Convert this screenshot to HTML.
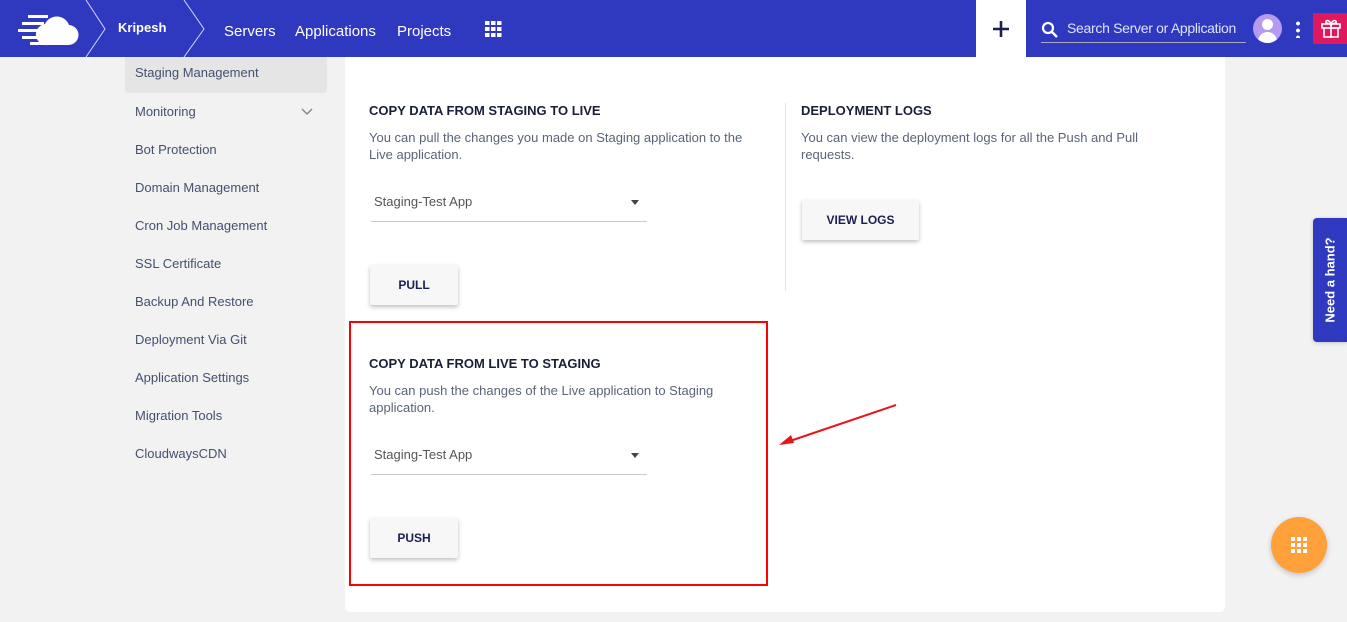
<!DOCTYPE html>
<html><head><style>
*{margin:0;padding:0;box-sizing:border-box}
body{width:1347px;height:622px;overflow:hidden;background:#f2f2f2;font-family:"Liberation Sans",sans-serif;position:relative}
.hdr{position:absolute;left:0;top:0;width:1347px;height:57px;background:#2f39bf;color:#fff}
.hdr .t{position:absolute;font-size:15px}
.side{position:absolute;left:125px;top:57px;width:202px}
.side div{height:38px;line-height:38px;padding-left:10px;font-size:13px;color:#43506e;position:relative}
.side .act{background:#e5e5e5;height:36px;line-height:32px;border-radius:0 0 3px 3px}
.card{position:absolute;left:345px;top:57px;width:880px;height:555px;background:#fff;border-radius:0 0 5px 5px}
.h{position:absolute;font-size:13px;font-weight:bold;color:#1a1f36}
.p{position:absolute;font-size:13px;color:#5a6477;line-height:17px}
.sel{position:absolute;width:276px;height:36px;border-bottom:1px solid #ccc;font-size:13px;color:#555;padding:8px 3px}
.sel:after{content:"";position:absolute;right:8px;top:14px;border:4px solid transparent;border-top:5px solid #444}
.btn{position:absolute;background:#f7f7f7;box-shadow:0 2px 4px rgba(0,0,0,.25);font-size:12px;font-weight:bold;color:#1a1f50;text-align:center;border-radius:2px}
</style></head><body>
<div class="hdr">
<svg style="position:absolute;left:18px;top:12px" width="62" height="34" viewBox="0 0 62 34"><path d="M30 33h20a10 10 0 0 0 1-20 13 13 0 0 0-24-1 10 10 0 0 0 3 21z" fill="#fff"/><rect x="10" y="3" width="20" height="3" fill="#fff"/><rect x="4" y="10" width="22" height="3" fill="#fff"/><rect x="0" y="17" width="28" height="3" fill="#fff"/><rect x="4" y="24" width="24" height="3" fill="#fff"/><rect x="12" y="30" width="16" height="3" fill="#fff"/></svg>
<svg style="position:absolute;left:84px;top:0" width="125" height="57"><path d="M2 0L21 29 2 57M100 0L120 29 100 57" stroke="#fff" stroke-width="1" fill="none" opacity=".8"/></svg>
<div class="t" style="left:118px;top:20px;font-size:13px;font-weight:bold">Kripesh</div>
<div class="t" style="left:224px;top:23px">Servers</div>
<div class="t" style="left:295px;top:23px">Applications</div>
<div class="t" style="left:397px;top:23px">Projects</div>
<svg style="position:absolute;left:485px;top:21px" width="17" height="16"><g fill="#fff"><rect x="0" y="0" width="4.5" height="4"/><rect x="6" y="0" width="4.5" height="4"/><rect x="12" y="0" width="4.5" height="4"/><rect x="0" y="6" width="4.5" height="4"/><rect x="6" y="6" width="4.5" height="4"/><rect x="12" y="6" width="4.5" height="4"/><rect x="0" y="12" width="4.5" height="4"/><rect x="6" y="12" width="4.5" height="4"/><rect x="12" y="12" width="4.5" height="4"/></g></svg>
<div style="position:absolute;left:976px;top:0;width:50px;height:57px;background:#fff"></div>
<svg style="position:absolute;left:992px;top:20px" width="18" height="18"><path d="M9 1v16M1 9h16" stroke="#1a1f50" stroke-width="2.6"/></svg>
<svg style="position:absolute;left:1041px;top:21px" width="18" height="18"><circle cx="7" cy="7" r="5" stroke="#fff" stroke-width="2.2" fill="none"/><path d="M11 11l5 5" stroke="#fff" stroke-width="2.4"/></svg>
<div class="t" style="left:1067px;top:20px;font-size:14px;color:#dfe2f7;letter-spacing:-.3px">Search Server or Application</div>
<div style="position:absolute;left:1041px;top:42px;width:205px;height:1px;background:#aab"></div>
<div style="position:absolute;left:1253px;top:14px;width:29px;height:29px;border-radius:50%;background:#b69af0;overflow:hidden"><div style="position:absolute;left:9px;top:5px;width:11px;height:11px;border-radius:50%;background:#fff"></div><div style="position:absolute;left:5px;top:18px;width:19px;height:14px;border-radius:10px 10px 0 0;background:#fff"></div></div>
<div style="position:absolute;left:1296px;top:20px;width:4px;height:18px;background:radial-gradient(circle,#fff 1.8px,transparent 2px) 0 0/4px 7px"></div>
<div style="position:absolute;left:1313px;top:13px;width:34px;height:31px;background:#e0185d"></div>
<svg style="position:absolute;left:1320px;top:17px" width="22" height="22" viewBox="0 0 22 22" fill="none" stroke="#fff" stroke-width="1.6"><rect x="2" y="7" width="18" height="4"/><rect x="4" y="11" width="14" height="9"/><path d="M11 7v13M11 7C9 2 5 3 6 6zM11 7c2-5 6-4 5-1z"/></svg>
</div>
<div class="side">
<div class="act">Staging Management</div>
<div>Monitoring<svg style="position:absolute;right:14px;top:15px" width="12" height="8"><path d="M1 1l5 5 5-5" stroke="#888" stroke-width="1.5" fill="none"/></svg></div>
<div>Bot Protection</div><div>Domain Management</div><div>Cron Job Management</div><div>SSL Certificate</div><div>Backup And Restore</div><div>Deployment Via Git</div><div>Application Settings</div><div>Migration Tools</div><div>CloudwaysCDN</div>
</div>
<div class="card"></div>
<div class="h" style="left:369px;top:103px">COPY DATA FROM STAGING TO LIVE</div>
<div class="p" style="left:369px;top:129px;width:400px">You can pull the changes you made on Staging application to the Live application.</div>
<div class="sel" style="left:371px;top:186px">Staging-Test App</div>
<div class="btn" style="left:370px;top:265px;width:88px;height:40px;line-height:40px">PULL</div>
<div style="position:absolute;left:785px;top:103px;width:1px;height:188px;background:#e5e5e5"></div>
<div class="h" style="left:801px;top:103px">DEPLOYMENT LOGS</div>
<div class="p" style="left:801px;top:129px;width:370px">You can view the deployment logs for all the Push and Pull requests.</div>
<div class="btn" style="left:802px;top:200px;width:117px;height:40px;line-height:40px">VIEW LOGS</div>
<div style="position:absolute;left:349px;top:321px;width:419px;height:265px;border:2px solid #f00"></div>
<div class="h" style="left:369px;top:356px">COPY DATA FROM LIVE TO STAGING</div>
<div class="p" style="left:369px;top:382px;width:380px">You can push the changes of the Live application to Staging application.</div>
<div class="sel" style="left:371px;top:439px">Staging-Test App</div>
<div class="btn" style="left:370px;top:518px;width:88px;height:40px;line-height:40px">PUSH</div>
<svg style="position:absolute;left:775px;top:400px" width="125" height="50"><path d="M121 5L12 42" stroke="#e8141b" stroke-width="2"/><path d="M4 45l12-10 3 8z" fill="#e8141b"/></svg>
<div style="position:absolute;left:1313px;top:218px;width:34px;height:124px;background:#2f39bf;border-radius:4px 0 0 4px;box-shadow:0 1px 4px rgba(0,0,0,.2)"><div style="position:absolute;left:17px;top:62px;transform:translate(-50%,-50%) rotate(-90deg);color:#fff;font-size:13px;font-weight:bold;white-space:nowrap">Need a hand?</div></div>
<div style="position:absolute;left:1271px;top:517px;width:56px;height:56px;border-radius:50%;background:#ffa03a;box-shadow:0 2px 6px rgba(0,0,0,.2)"></div>
<svg style="position:absolute;left:1291px;top:537px" width="16" height="16"><g fill="#fff"><rect x="0" y="0" width="4" height="4"/><rect x="6" y="0" width="4" height="4"/><rect x="12" y="0" width="4" height="4"/><rect x="0" y="6" width="4" height="4"/><rect x="6" y="6" width="4" height="4"/><rect x="12" y="6" width="4" height="4"/><rect x="0" y="12" width="4" height="4"/><rect x="6" y="12" width="4" height="4"/><rect x="12" y="12" width="4" height="4"/></g></svg>
</body></html>
